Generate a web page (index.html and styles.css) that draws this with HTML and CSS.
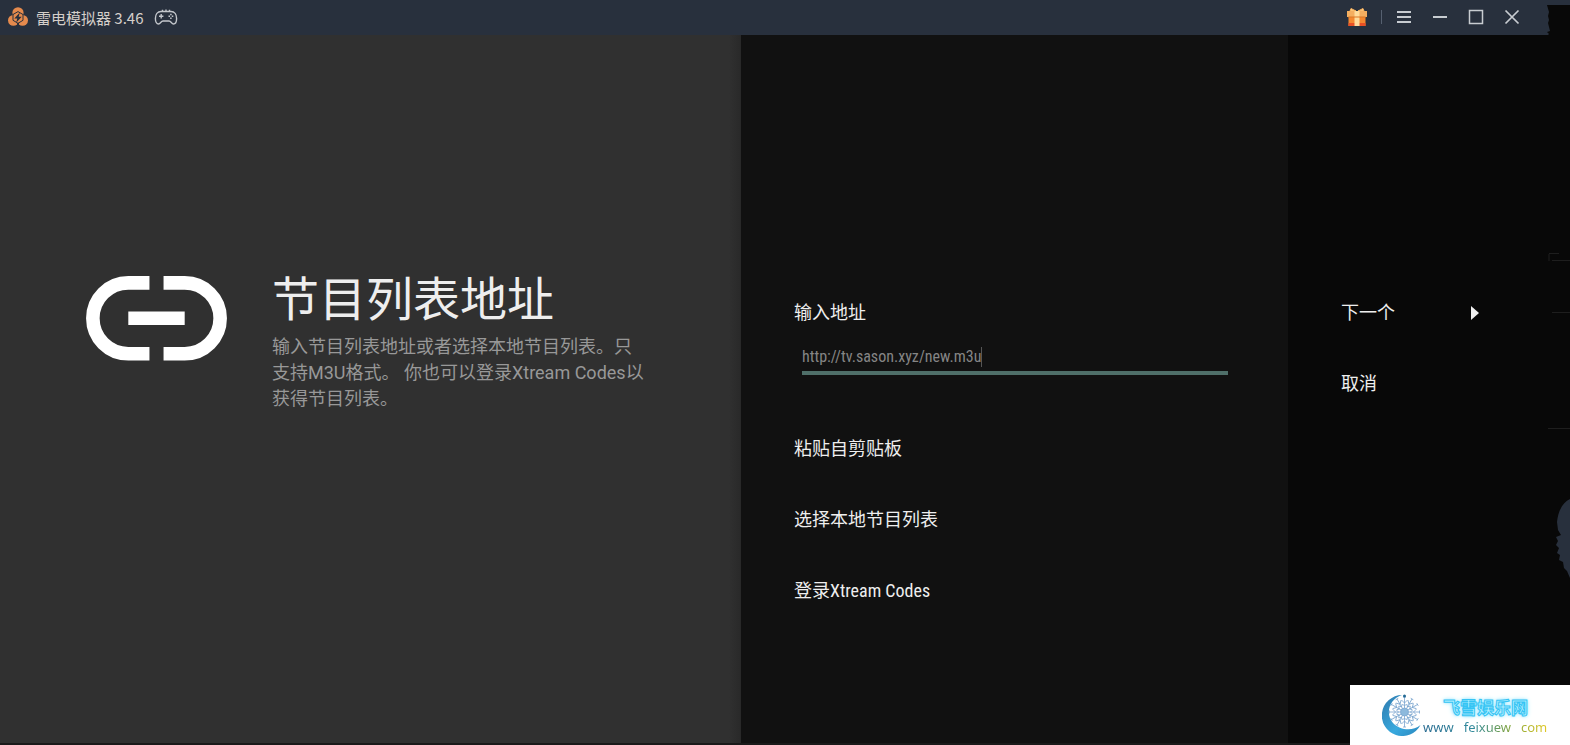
FILE: index.html
```html
<!DOCTYPE html>
<html lang="zh-CN">
<head>
<meta charset="utf-8">
<meta name="viewport" content="width=device-width, initial-scale=1">
<title>雷电模拟器 3.46</title>
<link rel="stylesheet" href="styles.css">
</head>
<body>
<header class="titlebar">
  <svg class="logo" viewBox="0 0 20 20" aria-hidden="true">
    <g fill="#e58a4d"><circle cx="10" cy="5.8" r="5.6"/><circle cx="5.400" cy="13.400" r="5.400"/><circle cx="14.600" cy="13.400" r="5.400"/></g>
    <path d="M10 4.600 15 7.500v5.800l-5 3-5-3V7.500z" fill="none" stroke="#28303d" stroke-width="1"/>
    <path d="M11.800 5.600 6.300 11.400h3l-1.200 4.400 5.600-6.100h-3z" fill="#28303d"/>
    <path d="M8.800 16 10 20l1.200-4z" fill="#28303d"/>
  </svg>
  <h1 class="app-name">雷电模拟器 3.46</h1>
  <svg class="gamepad" viewBox="0 0 24 18" fill="none" stroke="#c3c6cb" stroke-width="1.400" aria-hidden="true">
    <path d="M7 3.500h10c3.400 0 5.600 2.800 5.600 7 0 3.200-1.200 5.500-3.200 5.500-1.800 0-2.400-3-4.400-3H9c-2 0-2.600 3-4.400 3-2 0-3.200-2.300-3.200-5.500 0-4.200 2.200-7 5.600-7z"/>
    <path d="M8.500 3V1.700M15.500 3V1.700M12 3.500V1.500M5 8.300h4.400M7.200 6.100v4.400"/>
    <path d="M14.500 8.300h1.500M17.800 8.300h1.500M16.900 5.700v1.500M16.900 9.500v1.500" stroke-width="1.500"/>
  </svg>
  <nav class="window-tools" aria-label="窗口">
    <button class="tool" aria-label="礼物">
      <svg class="gift" viewBox="0 0 20 20">
        <path d="M4 1.500 9 4H3zM16 1.500 11 4h6z" fill="#ffd18c" stroke="#f7b15d" stroke-width="1"/>
        <path d="M0 4h20v6H0z" fill="#f4ae60"/><path d="M1.500 10h17v9h-17z" fill="#f5882f"/>
        <path d="M1.500 16h17v3h-17z" fill="#e95026"/>
        <path d="M7.500 4h5v15h-5z" fill="#ffdb9b"/><path d="M1.500 9.500h17v1h-17z" fill="#d97727"/>
      </svg>
    </button>
    <span class="divider"></span>
    <button class="tool" aria-label="菜单"><svg viewBox="0 0 16 16"><path d="M1 3h14M1 8h14M1 13h14"/></svg></button>
    <button class="tool" aria-label="最小化"><svg viewBox="0 0 16 16"><path d="M1 8h14"/></svg></button>
    <button class="tool" aria-label="最大化"><svg viewBox="0 0 16 16"><path d="M1.500 1.500h13v13h-13z" stroke-width="1.500"/></svg></button>
    <button class="tool" aria-label="关闭"><svg viewBox="0 0 16 16"><path d="m1.500 1.500 13 13m0-13-13 13" stroke-width="1.700"/></svg></button>
  </nav>
  <svg class="torn-edge" viewBox="0 0 23 31" aria-hidden="true"><path d="M0 0h23v31H0l2-2-2-2 3-1-1-4-1-4 1-3-1-4 1-4z" fill="#080808"/></svg>
</header>
<main class="guide">
  <section class="intro">
    <svg class="link-icon" viewBox="0 0 140 84" fill="none" stroke="#fff" stroke-width="13.500" aria-hidden="true">
      <path d="M63 6.800H42a35.200 35.200 0 0 0 0 70.400h21M77 6.800h21a35.200 35.200 0 0 1 0 70.400H77"/>
      <path d="M42 42h56"/>
    </svg>
    <div class="intro-text">
      <h2 class="intro-title">节目列表地址</h2>
      <p class="intro-desc">输入节目列表地址或者选择本地节目列表。只支持M3U格式。 你也可以登录Xtream Codes以获得节目列表。</p>
    </div>
  </section>
  <section class="options">
    <label class="row" for="address">输入地址</label>
    <div class="field"><input id="address" class="address" type="text" value="http://tv.sason.xyz/new.m3u"><span class="caret"></span></div>
    <button class="row">粘贴自剪贴板</button>
    <button class="row">选择本地节目列表</button>
    <button class="row">登录Xtream Codes</button>
  </section>
  <section class="actions">
    <button class="row next">下一个<svg class="arrow" viewBox="0 0 8 14" aria-hidden="true"><path d="M0 0 8 7 0 14z" fill="#f0f0f0"/></svg></button>
    <button class="row">取消</button>
  </section>
</main>
<svg class="edge-lines" viewBox="0 0 22 180" stroke="#1e1e1e" aria-hidden="true"><path d="M1 .500h10M1 1v7M4 7.500h18M4 59.500h18M0 175.500h22"/></svg>
<svg class="blob" viewBox="0 0 14 80" aria-hidden="true"><path d="M14 1C7 4 2 13 1 24l1 8 3 5-5 2 2 4-2 4 3 3-2 5 3 2-1 5 4 2 1 6 3 3 3 7z" fill="#28303d"/></svg>
<aside class="watermark">
  <svg class="moon" viewBox="0 0 40 42" aria-hidden="true">
    <defs>
      <linearGradient id="ice" x1="0" y1="0" x2="1" y2="1"><stop offset="0" stop-color="#2f79ad"/><stop offset=".6" stop-color="#38a9de"/><stop offset="1" stop-color="#2b86bd"/></linearGradient>
      <g id="ray"><path d="M0-4v-11M0-9l-3-3M0-9l3-3M0-6l-2-2M0-6l2-2M-1.500-15h3"/></g>
    </defs>
    <path d="M20 1A20.500 20.500 0 1 0 38.500 31C30 38 18 36 11 29 3 20 7 5 20 1z" fill="url(#ice)"/>
    <g transform="translate(22.500 18)" fill="none" stroke="#7ba5cf" stroke-width=".8">
      <use href="#ray"/><use href="#ray" transform="rotate(30)"/><use href="#ray" transform="rotate(60)"/><use href="#ray" transform="rotate(90)"/><use href="#ray" transform="rotate(120)"/><use href="#ray" transform="rotate(150)"/><use href="#ray" transform="rotate(180)"/><use href="#ray" transform="rotate(210)"/><use href="#ray" transform="rotate(240)"/><use href="#ray" transform="rotate(270)"/><use href="#ray" transform="rotate(300)"/><use href="#ray" transform="rotate(330)"/>
      <circle r="4" fill="#8db9dc"/>
    </g>
    <circle cx="22.500" cy="2" r="1.500" fill="#236993"/>
  </svg>
  <div class="site">
    <strong class="site-name">飞雪娱乐网</strong>
    <span class="site-url"><span>www</span><span>feixuew</span><span>com</span></span>
  </div>
</aside>
</body>
</html>
```
FILE: styles.css
```css
* { box-sizing: border-box; }

body {
  margin: 0;
  min-height: 100vh;
  display: flex;
  flex-direction: column;
  position: relative;
  background: #080808;
  color: #eee;
  font-family: "Roboto Condensed", Roboto, "Noto Sans CJK SC", sans-serif;
  font-size: 18px;
}

button {
  border: 0;
  padding: 0;
  background: none;
  color: inherit;
  font: inherit;
  text-align: left;
}

.titlebar {
  position: relative;
  display: flex;
  align-items: center;
  height: 35px;
  padding: 0 50px 1px 8px;
  background: #28303d;
}

.logo { width: 20px; height: 20px; }

.app-name {
  margin: 0 8px;
  color: #d5cfca;
  font: 400 15px "Noto Sans CJK SC", sans-serif;
}

.gamepad { width: 24px; height: 18px; margin-left: 2px; }

.window-tools {
  display: flex;
  align-items: center;
  gap: 20px;
  margin-left: auto;
}

.tool {
  display: grid;
  width: 16px;
  height: 20px;
  place-items: center;
}

.tool svg {
  width: 16px;
  height: 16px;
  fill: none;
  stroke: #c8ccd1;
  stroke-width: 2;
}

.tool .gift {
  width: 20px;
  height: 20px;
  stroke: none;
}

.divider {
  width: 1px;
  height: 14px;
  margin: 0 -6px 0 -2px;
  background: #566070;
}

.torn-edge {
  position: absolute;
  top: 5px;
  right: 0;
  width: 23px;
}

.guide {
  flex: 1;
  display: grid;
  grid-template-columns: 741fr 547fr 282fr;
  border-bottom: 2px solid #1a1a1a;
}

.intro {
  display: flex;
  align-items: flex-start;
  gap: 45px;
  padding: 231px 93px 0 86px;
  background: linear-gradient(to left, #292929, #303030 12px);
}

.link-icon {
  flex: none;
  width: 141px;
  margin-top: 10px;
}

.intro-title {
  margin: 0;
  font-weight: 400;
  font-size: 47px;
  line-height: 68px;
}

.intro-desc {
  margin: 0;
  color: #989898;
  font-family: Roboto, "Noto Sans CJK SC", sans-serif;
  line-height: 26px;
}

.options {
  padding: 260px 60px 0 53px;
  background: #111;
}

.actions { padding: 260px 60px 0 53px; }

.row {
  display: block;
  width: 100%;
  height: 36px;
  margin-bottom: 35px;
  line-height: 36px;
}

.options label.row { margin-bottom: 8px; }

.field {
  display: flex;
  align-items: flex-end;
  height: 36px;
  margin: 0 0 56px 8px;
  padding-bottom: 4px;
  border-bottom: 4px solid #4f6f69;
}

.address {
  field-sizing: content;
  border: 0;
  padding: 0;
  outline: 0;
  background: none;
  color: #858585;
  font: 16px/20px "Roboto Condensed", Roboto, sans-serif;
}

.caret {
  width: 1px;
  height: 20px;
  background: #555;
}

.next {
  display: flex;
  align-items: center;
  justify-content: space-between;
  padding-right: 31px;
}

.arrow { width: 8px; height: 14px; }

.edge-lines {
  position: absolute;
  top: 253px;
  right: 0;
  width: 22px;
}

.blob {
  position: absolute;
  top: 498px;
  right: 0;
  width: 14px;
}

.watermark {
  position: absolute;
  right: 0;
  bottom: 0;
  display: flex;
  align-items: flex-start;
  width: 220px;
  height: 60px;
  padding: 9px 0 0 32px;
  background: #fff;
}

.moon { width: 40px; height: 42px; }

.site {
  display: flex;
  flex-direction: column;
  margin-left: 1px;
}

.site-name {
  padding-left: 20px;
  color: #b5f2ff;
  font: 700 17px/25px "Noto Sans CJK SC", sans-serif;
  -webkit-text-stroke: 1px #35c4f4;
  text-shadow: 0 0 3px #8be4ff, 0 0 5px #8be4ff;
}

.site-url {
  display: flex;
  gap: 10px;
  background: linear-gradient(to right, #25688f, #318a9c 40%, #80a33d 70%, #e1c825);
  background-clip: text;
  color: transparent;
  font: 13px/16px "Noto Sans", sans-serif;
}
```
